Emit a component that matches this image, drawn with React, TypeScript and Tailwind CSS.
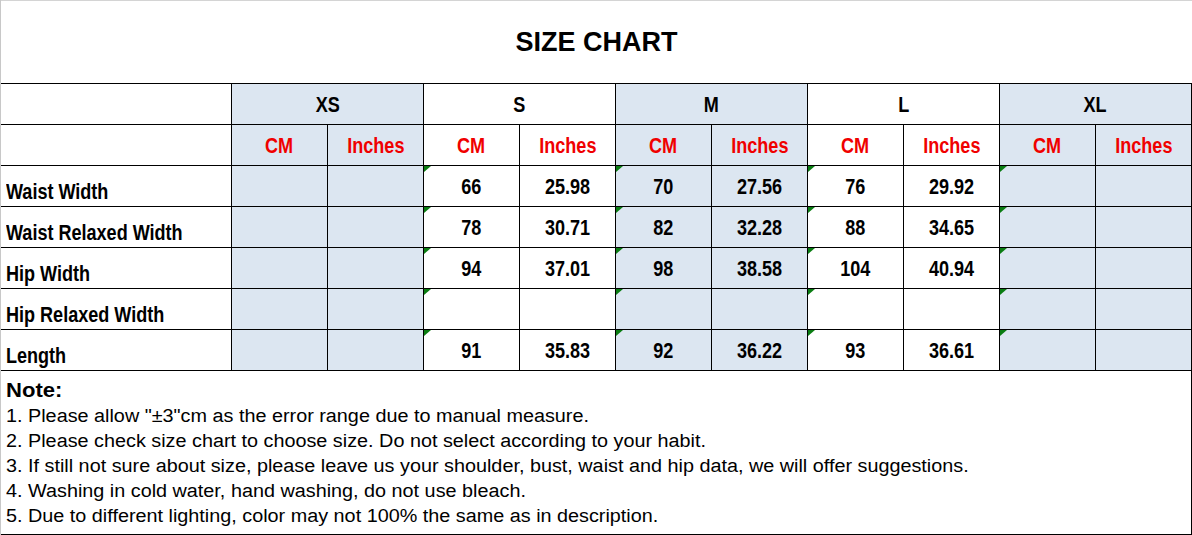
import React from 'react';

type Size = { name: string; blue: boolean };

const sizes: Size[] = [
  { name: 'XS', blue: true },
  { name: 'S', blue: false },
  { name: 'M', blue: true },
  { name: 'L', blue: false },
  { name: 'XL', blue: true },
];

// values per row, in size order: [cm, inches]
const rows: { label: string; values: string[][] }[] = [
  { label: 'Waist Width', values: [['', ''], ['66', '25.98'], ['70', '27.56'], ['76', '29.92'], ['', '']] },
  { label: 'Waist Relaxed Width', values: [['', ''], ['78', '30.71'], ['82', '32.28'], ['88', '34.65'], ['', '']] },
  { label: 'Hip Width', values: [['', ''], ['94', '37.01'], ['98', '38.58'], ['104', '40.94'], ['', '']] },
  { label: 'Hip Relaxed Width', values: [['', ''], ['', ''], ['', ''], ['', ''], ['', '']] },
  { label: 'Length', values: [['', ''], ['91', '35.83'], ['92', '36.22'], ['93', '36.61'], ['', '']] },
];

const notes = [
  '1. Please allow "±3"cm as the error range due to manual measure.',
  '2. Please check size chart to choose size. Do not select according to your habit.',
  '3. If still not sure about size, please leave us your shoulder, bust, waist and hip data, we will offer suggestions.',
  '4. Washing in cold water, hand washing, do not use bleach.',
  '5. Due to different lighting, color may not 100% the same as in description.',
];

// Arial Narrow look: squeeze Liberation Sans Bold horizontally
function Narrow({ children, left }: { children: React.ReactNode; left?: boolean }) {
  return (
    <span className={`inline-block whitespace-nowrap scale-x-[0.82] ${left ? 'origin-left' : 'origin-center'}`}>
      {children}
    </span>
  );
}

function Marker() {
  return (
    <svg className="absolute left-0 top-0" width="7" height="7" viewBox="0 0 7 7">
      <polygon points="0,0 7,0 0,6" fill="#0a7d12" />
    </svg>
  );
}

const cell = 'h-[41px] border-r border-b border-black flex items-center justify-center text-[22px]';

export default function App() {
  return (
    <div className="w-[1192px] h-[535px] bg-white border-l border-[#c8c8c8] text-black font-['Liberation_Sans',Arial,sans-serif]">
      <div className="h-[83px] border-t border-[#d4d4d4] flex items-center justify-center">
        <h1 className="text-[27px] font-bold leading-none">SIZE CHART</h1>
      </div>

      <div className="grid grid-cols-[231px_repeat(10,96px)] border-t border-black font-bold">
        <div className="h-[41px] border-r border-b border-black" />
        {sizes.map((s) => (
          <div key={s.name} className={`col-span-2 ${cell} ${s.blue ? 'bg-[#dce6f1]' : 'bg-white'}`}>
            <Narrow>{s.name}</Narrow>
          </div>
        ))}

        <div className="h-[41px] border-r border-b border-black" />
        {sizes.map((s) => (
          <React.Fragment key={s.name}>
            <div className={`${cell} text-[#f00000] ${s.blue ? 'bg-[#dce6f1]' : 'bg-white'}`}>
              <Narrow>CM</Narrow>
            </div>
            <div className={`${cell} text-[#f00000] ${s.blue ? 'bg-[#dce6f1]' : 'bg-white'}`}>
              <Narrow>Inches</Narrow>
            </div>
          </React.Fragment>
        ))}

        {rows.map((r) => (
          <React.Fragment key={r.label}>
            <div className="h-[41px] border-r border-b border-black flex items-end pl-[5px] pb-[1px] text-[22px] leading-[26px]">
              <Narrow left>{r.label}</Narrow>
            </div>
            {sizes.map((s, i) => (
              <React.Fragment key={s.name}>
                <div className={`relative ${cell} ${s.blue ? 'bg-[#dce6f1]' : 'bg-white'}`}>
                  {i > 0 && <Marker />}
                  <Narrow>{r.values[i][0]}</Narrow>
                </div>
                <div className={`${cell} ${s.blue ? 'bg-[#dce6f1]' : 'bg-white'}`}>
                  <Narrow>{r.values[i][1]}</Narrow>
                </div>
              </React.Fragment>
            ))}
          </React.Fragment>
        ))}
      </div>

      <div className="h-[164px] border-b border-r border-black pl-[5px] pt-[5px]">
        <p className="text-[21px] font-bold leading-[28px]">
          <span className="inline-block scale-x-[1.05] origin-left">Note:</span>
        </p>
        {notes.map((n) => (
          <p key={n} className="text-[18px] leading-[25px]">
            <span className="inline-block whitespace-nowrap scale-x-[1.1] origin-left">{n}</span>
          </p>
        ))}
      </div>
    </div>
  );
}
